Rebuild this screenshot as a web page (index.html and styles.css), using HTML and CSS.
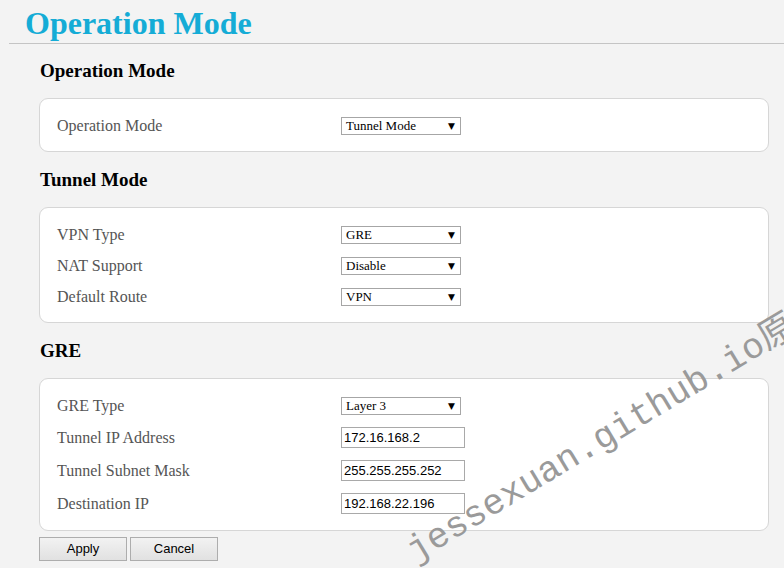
FILE: index.html
```html
<!DOCTYPE html>
<html>
<head>
<meta charset="utf-8">
<link rel="stylesheet" href="styles.css">
</head>
<body>
<div class="page">
  <h1 class="title">Operation Mode</h1>

  <h2 class="section first">Operation Mode</h2>
  <div class="panel">
    <div class="row"><span class="label">Operation Mode</span><span class="sel">Tunnel Mode<i class="arrow">&#9660;</i></span></div>
  </div>

  <h2 class="section">Tunnel Mode</h2>
  <div class="panel">
    <div class="row"><span class="label">VPN Type</span><span class="sel">GRE<i class="arrow">&#9660;</i></span></div>
    <div class="row"><span class="label">NAT Support</span><span class="sel">Disable<i class="arrow">&#9660;</i></span></div>
    <div class="row"><span class="label">Default Route</span><span class="sel">VPN<i class="arrow">&#9660;</i></span></div>
  </div>

  <h2 class="section">GRE</h2>
  <div class="panel">
    <div class="row"><span class="label">GRE Type</span><span class="sel">Layer 3<i class="arrow">&#9660;</i></span></div>
    <div class="row tall"><span class="label">Tunnel IP Address</span><span class="inp">172.16.168.2</span></div>
    <div class="row tall"><span class="label">Tunnel Subnet Mask</span><span class="inp">255.255.255.252</span></div>
    <div class="row tall"><span class="label">Destination IP</span><span class="inp">192.168.22.196</span></div>
  </div>

  <div class="buttons">
    <span class="btn">Apply</span>
    <span class="btn">Cancel</span>
  </div>

  <div class="watermark">jessexuan.github.io原</div>
</div>
</body>
</html>
```

FILE: styles.css
```css
html, body {
  margin: 0;
  padding: 0;
  background: #f3f3f3;
}
.page {
  position: relative;
  width: 784px;
  height: 568px;
  overflow: hidden;
  font-family: "Liberation Serif", "Times New Roman", serif;
}
.title {
  margin: 0 0 0 9px;
  padding: 4px 0 0 16px;
  height: 39px;
  line-height: 39px;
  font-size: 32px;
  font-weight: bold;
  color: #15acd6;
  border-bottom: 1px solid #c4c4c4;
}
.section {
  margin: 14px 0 14px 40px;
  height: 27px;
  line-height: 27px;
  font-size: 19px;
  font-weight: bold;
  color: #000;
}
.section.first {
  margin-top: 13px;
}
.panel {
  margin: 0 15px 0 39px;
  padding: 11px 17px 10px 17px;
  background: #fff;
  border: 1px solid #d6d6d6;
  border-radius: 9px;
}
.row {
  display: flex;
  align-items: center;
  height: 31px;
}
.row.tall {
  height: 33px;
}
.label {
  width: 284px;
  font-size: 16px;
  color: #555;
}
.sel {
  position: relative;
  box-sizing: border-box;
  width: 120px;
  height: 18px;
  line-height: 16px;
  padding-left: 4px;
  border: 1px solid #a6a6a6;
  background: #fff;
  font-size: 13px;
  color: #000;
}
.arrow {
  position: absolute;
  right: 5px;
  top: 0;
  font-style: normal;
  font-size: 9px;
  font-family: "DejaVu Sans", sans-serif;
}
.inp {
  box-sizing: border-box;
  width: 124px;
  height: 21px;
  line-height: 19px;
  padding-left: 2px;
  border: 1px solid #a9a9a9;
  background: #fff;
  font-family: "Liberation Sans", Arial, sans-serif;
  font-size: 13px;
  color: #000;
}
.buttons {
  display: flex;
  gap: 3px;
  margin: 6px 0 0 39px;
}
.btn {
  box-sizing: border-box;
  width: 88px;
  height: 24px;
  line-height: 22px;
  text-align: center;
  border: 1px solid #adadad;
  background: linear-gradient(#f2f2f2, #e1e1e1);
  font-family: "Liberation Sans", Arial, sans-serif;
  font-size: 13px;
  color: #000;
}
.watermark {
  position: absolute;
  left: 420px;
  top: 534px;
  transform-origin: 0 100%;
  transform: rotate(-31deg);
  white-space: nowrap;
  font-family: "Liberation Mono", "Noto Sans CJK SC", monospace;
  font-size: 36px;
  line-height: 36px;
  color: #9a9a9a;
}
```
